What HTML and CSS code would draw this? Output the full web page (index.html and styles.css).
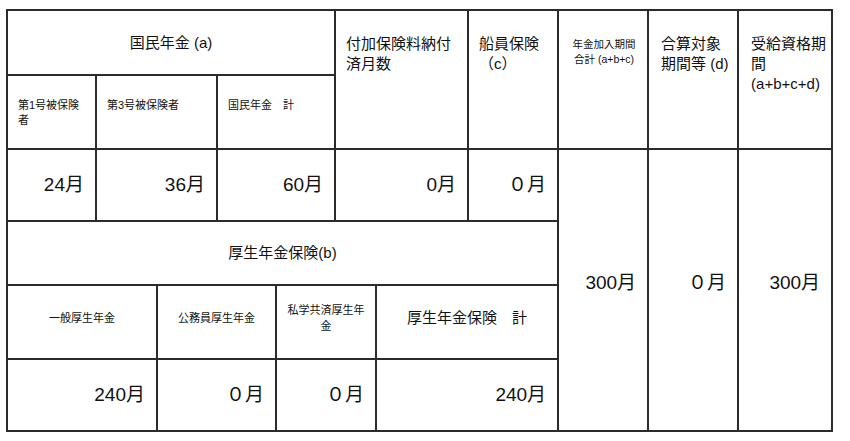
FILE: index.html
```html
<!DOCTYPE html>
<html lang="ja">
<head>
<meta charset="utf-8">
<title>年金加入期間</title>
<link rel="stylesheet" href="styles.css">
</head>
<body>
<table class="pension">
  <colgroup>
    <col class="c1"><col class="c2"><col class="c3"><col class="c4"><col class="c5"><col class="c6">
    <col class="c7"><col class="c8"><col class="c9"><col class="c10"><col class="c11">
  </colgroup>
  <tr class="r1">
    <td colspan="5" class="title">国民年金 (a)</td>
    <td colspan="2" rowspan="2" class="head">付加保険料納付<br>済月数</td>
    <td rowspan="2" class="head">船員保険<br>（c）</td>
    <td rowspan="2" class="head-small">年金加入期間<br>合計 (a+b+c)</td>
    <td rowspan="2" class="head wide-pad">合算対象<br>期間等 (d)</td>
    <td rowspan="2" class="head wide-pad">受給資格期<br>間<br>(a+b+c+d)</td>
  </tr>
  <tr class="r2">
    <td class="sub">第1号被保険<br>者</td>
    <td colspan="2" class="sub">第3号被保険者</td>
    <td colspan="2" class="sub">国民年金　計</td>
  </tr>
  <tr class="r3">
    <td class="num">24月</td>
    <td colspan="2" class="num">36月</td>
    <td colspan="2" class="num">60月</td>
    <td colspan="2" class="num">0月</td>
    <td class="num">０月</td>
    <td rowspan="4" class="num tall">300月</td>
    <td rowspan="4" class="num tall">０月</td>
    <td rowspan="4" class="num tall">300月</td>
  </tr>
  <tr class="r4">
    <td colspan="8" class="title">厚生年金保険(b)</td>
  </tr>
  <tr class="r5">
    <td colspan="2" class="sub-center">一般厚生年金</td>
    <td colspan="2" class="sub-center">公務員厚生年金</td>
    <td colspan="2" class="sub-center">私学共済厚生年<br>金</td>
    <td colspan="2" class="sub-total">厚生年金保険　計</td>
  </tr>
  <tr class="r6">
    <td colspan="2" class="num">240月</td>
    <td colspan="2" class="num">０月</td>
    <td colspan="2" class="num">０月</td>
    <td colspan="2" class="num">240月</td>
  </tr>
</table>
</body>
</html>
```

FILE: styles.css
```css
html, body {
  margin: 0;
  padding: 0;
  background: #ffffff;
}

body {
  font-family: "Liberation Sans", "Noto Sans CJK JP", sans-serif;
  color: #111111;
}

.pension {
  margin: 9px 0 0 6px;
  width: 827px;
  table-layout: fixed;
  border-collapse: collapse;
}

.pension td {
  border: 2px solid #2b2b2b;
  padding: 0;
  overflow: hidden;
}

.c1 { width: 89px; }
.c2 { width: 61px; }
.c3 { width: 60px; }
.c4 { width: 59px; }
.c5 { width: 59px; }
.c6 { width: 41px; }
.c7 { width: 92px; }
.c8 { width: 90px; }
.c9 { width: 90px; }
.c10 { width: 90px; }
.c11 { width: 94px; }

.r1 { height: 65px; }
.r2 { height: 74px; }
.r3 { height: 72px; }
.r4 { height: 64px; }
.r5 { height: 74px; }
.r6 { height: 72px; }

.title {
  text-align: center;
  vertical-align: middle;
  font-size: 15px;
  line-height: 20px;
}

.head {
  vertical-align: top;
  text-align: left;
  white-space: nowrap;
  font-size: 15px;
  line-height: 20px;
  padding: 23px 0 0 10px !important;
}

.head.wide-pad {
  padding-left: 12px !important;
}

.head-small {
  vertical-align: top;
  text-align: center;
  white-space: nowrap;
  font-size: 10.5px;
  line-height: 15px;
  padding: 26px 0 0 2px !important;
}

.sub {
  vertical-align: top;
  text-align: left;
  white-space: nowrap;
  font-size: 11px;
  line-height: 15px;
  padding: 22px 0 0 10px !important;
}

.sub-center {
  vertical-align: middle;
  text-align: center;
  white-space: nowrap;
  font-size: 11px;
  line-height: 16px;
  padding: 0 2px 8px 2px !important;
}

.sub-total {
  vertical-align: middle;
  text-align: center;
  font-size: 15px;
  line-height: 20px;
  padding: 0 0 8px 0 !important;
}

.num {
  text-align: right;
  vertical-align: middle;
  font-size: 19px;
  line-height: 24px;
  padding: 0 11px 0 0 !important;
}

.num.tall {
  padding-bottom: 14px !important;
}
```
